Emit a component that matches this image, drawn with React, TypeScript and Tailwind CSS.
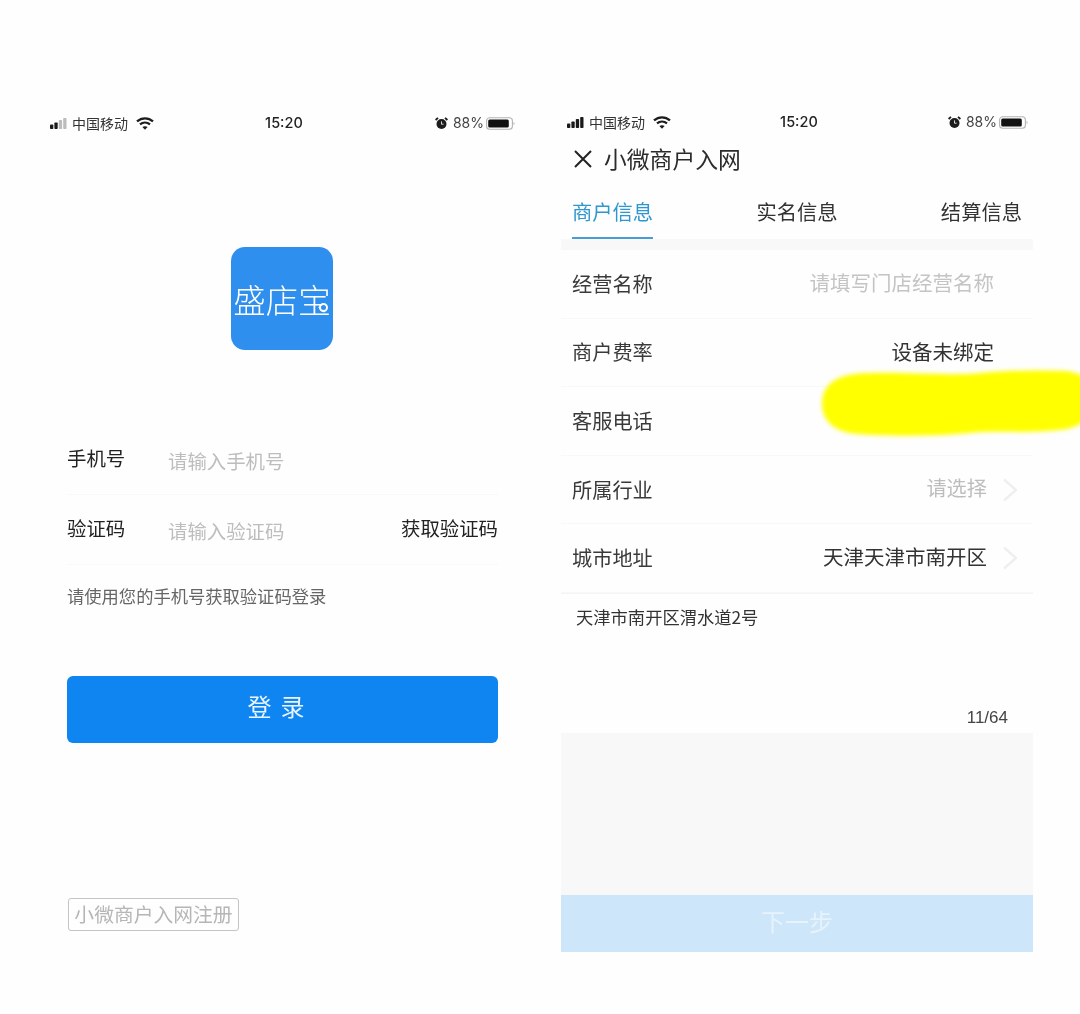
const FONT = "font-['Noto_Sans_CJK_SC','Noto_Sans',sans-serif]";

function Signal({ active }: { active: number }) {
  const bars = [
    { x: 0, h: 4.5 },
    { x: 4.4, h: 6.5 },
    { x: 8.8, h: 9 },
    { x: 13.2, h: 11 },
  ];
  return (
    <svg width="17" height="11" viewBox="0 0 17 11">
      {bars.map((b, i) => (
        <rect key={b.x} x={b.x} y={11 - b.h} width="3.3" height={b.h} rx="0.8" fill={i < active ? "#1a1a1a" : "#bcbcbc"} />
      ))}
    </svg>
  );
}

function Wifi() {
  return (
    <svg width="18" height="13" viewBox="0 0 18 13" fill="none" stroke="#1c1c1c" strokeWidth="2.3">
      <path d="M1 4.4 C5.8 0.3 12.2 0.3 17 4.4" />
      <path d="M4 7.4 C6.9 5 11.1 5 14 7.4" />
      <path d="M9 12.8 L6.4 10 C7.8 8.9 10.2 8.9 11.6 10 Z" fill="#1c1c1c" stroke="none" />
    </svg>
  );
}

function Alarm() {
  return (
    <svg width="13" height="13" viewBox="0 0 13 13">
      <circle cx="6.5" cy="7" r="5" fill="#1c1c1c" />
      <path d="M0.6 3 L3 0.8 M12.4 3 L10 0.8" stroke="#1c1c1c" strokeWidth="1.8" />
      <path d="M6.5 4.4 V7.2 H8.6" stroke="#eee" strokeWidth="0.9" fill="none" />
    </svg>
  );
}

function Battery() {
  return (
    <svg width="30" height="13" viewBox="0 0 30 13">
      <rect x="0.6" y="0.8" width="25.8" height="11.4" rx="3" fill="none" stroke="#b4b4b4" strokeWidth="1.1" />
      <rect x="2.2" y="2.4" width="20.6" height="8.2" rx="1.5" fill="#111" />
      <path d="M27.6 4.8 C28.8 5.2 28.8 7.8 27.6 8.2 Z" fill="#aaa" />
    </svg>
  );
}

function Chevron() {
  return (
    <svg width="16" height="24" viewBox="0 0 16 24" fill="none" stroke="#efefef" strokeWidth="2.4">
      <path d="M2 1.5 L14 12 L2 22.5" />
    </svg>
  );
}

function StatusBar({ active }: { active: number }) {
  return (
    <div className="flex h-[20px] items-center justify-between text-[#333]">
      <div className="flex items-center gap-[5px]">
        <Signal active={active} />
        <span className="pb-[1px] text-[14px] leading-[20px]">中国移动</span>
        <span className="ml-[3px]"><Wifi /></span>
      </div>
      <span className="mr-[21px] font-['Inter',sans-serif] text-[14.5px] font-medium leading-[20px] text-[#222]">15:20</span>
      <div className="flex items-center">
        <Alarm />
        <span className="ml-[5px] mr-[2px] font-['Inter',sans-serif] text-[14px] leading-[20px] text-[#444]">88%</span>
        <Battery />
      </div>
    </div>
  );
}

function FormRow({ label, children, last }: { label: string; children: React.ReactNode; last?: boolean }) {
  return (
    <div className={`flex h-[68.6px] items-center justify-between pl-[11px] ${last ? "" : "border-b border-[#f8f8f8]"}`}>
      <span className="text-[20.2px] leading-[28px] text-[#3a3a3a]">{label}</span>
      {children}
    </div>
  );
}

export default function App() {
  return (
    <div className={`relative flex h-[1014px] w-[1080px] overflow-hidden bg-[#fefefe] blur-[0.4px] ${FONT}`}>
      {/* left phone */}
      <div className="flex w-[561px] flex-col pt-[113px]">
        <div className="pl-[50px] pr-[45px]">
          <StatusBar active={2} />
        </div>
        <div className="mt-[114px] flex justify-center">
          <div className="relative ml-[3px] flex h-[103px] w-[102px] items-center justify-center rounded-[14px] bg-[#2f8fef] pt-[1px]">
            <span className="whitespace-nowrap text-[32.5px] font-light leading-none text-white">盛店宝</span>
            <span className="absolute left-[88px] top-[56px] h-[9px] w-[9px] rounded-full border-[2px] border-white bg-[#2f8fef]" />
          </div>
        </div>
        <div className="ml-[67px] mr-[63px] mt-[75px]">
          <div className="flex h-[70px] items-center border-b border-[#f9f9f9]">
            <span className="w-[101px] pb-[4px] text-[19.4px] leading-[28px] text-[#222]">手机号</span>
            <span className="pt-[3px] text-[19.4px] leading-[28px] text-[#bdbdbd]">请输入手机号</span>
          </div>
          <div className="flex h-[70px] items-center justify-between border-b border-[#f9f9f9]">
            <div className="flex items-center">
              <span className="w-[101px] pb-[4px] text-[19.4px] leading-[28px] text-[#222]">验证码</span>
              <span className="pt-[3px] text-[19.4px] leading-[28px] text-[#bdbdbd]">请输入验证码</span>
            </div>
            <span className="pb-[4px] text-[19.4px] leading-[28px] text-[#222]">获取验证码</span>
          </div>
          <p className="mt-[19px] text-[17.3px] leading-[24px] text-[#666]">请使用您的手机号获取验证码登录</p>
          <div className="mt-[68px] flex h-[67px] items-center justify-center rounded-[6px] bg-[#0f85f1] pb-[8px] pr-[4px] text-[24px] tracking-[9px] text-[#e8f4ff]">
            登录
          </div>
          <div className="ml-[1px] mt-[155px] flex h-[33px] w-[171px] items-center justify-center rounded-[3px] border border-[#c4c4c4] pb-[2px] text-[19.8px] text-[#b6b6b6]">
            小微商户入网注册
          </div>
        </div>
      </div>

      {/* right phone */}
      <div className="flex h-[952px] w-[472px] flex-col pt-[112px]">
        <div className="pl-[6px] pr-[4px]">
          <StatusBar active={4} />
        </div>
        <div className="mt-[15px] flex h-[24px] items-center pl-[13px]">
          <svg width="18" height="18" viewBox="0 0 18 18" stroke="#222" strokeWidth="2" fill="none">
            <path d="M1 1 L17 17 M17 1 L1 17" />
          </svg>
          <span className="ml-[12px] text-[22.8px] leading-[30px] text-[#2b2b2b]">小微商户入网</span>
        </div>
        <div className="mt-[21px] flex h-[47px] items-start justify-between pl-[11px] pr-[11px] pt-[4px]">
          <span className="h-[43px] border-b-[2px] border-[#4a9dd4] text-[20.3px] leading-[30px] text-[#2f97cf]">商户信息</span>
          <span className="text-[20.3px] leading-[30px] text-[#333]">实名信息</span>
          <span className="text-[20.3px] leading-[30px] text-[#333]">结算信息</span>
        </div>
        <div className="h-[11px] bg-[#f8f8f8]" />
        <FormRow label="经营名称">
          <span className="pb-[3px] pr-[39px] text-[20.5px] text-[#c4c4c4]">请填写门店经营名称</span>
        </FormRow>
        <FormRow label="商户费率">
          <span className="pb-[2px] pr-[39px] text-[20.5px] text-[#333]">设备未绑定</span>
        </FormRow>
        <FormRow label="客服电话">
          <span />
        </FormRow>
        <FormRow label="所属行业">
          <div className="flex items-center pr-[15px]">
            <span className="pb-[3px] text-[20.2px] text-[#bdbdbd]">请选择</span>
            <span className="ml-[15px]"><Chevron /></span>
          </div>
        </FormRow>
        <FormRow label="城市地址">
          <div className="flex items-center pr-[15px]">
            <span className="pb-[3px] text-[20.5px] text-[#333]">天津天津市南开区</span>
            <span className="ml-[15px]"><Chevron /></span>
          </div>
        </FormRow>
        <div className="flex h-[140px] flex-col justify-between border-t border-[#f5f5f5] pb-[4px] pl-[15px] pr-[25px] pt-[10px]">
          <p className="text-[17.3px] leading-[26px] text-[#333]">天津市南开区渭水道2号</p>
          <p className="text-right font-['Liberation_Sans',sans-serif] text-[17px] leading-[22px] text-[#444]">11/64</p>
        </div>
        <div className="flex-1 bg-[#f8f8f8]" />
        <div className="flex h-[57px] items-center justify-center bg-[#cde6fa] pb-[5px] text-[24px] text-[#e6f3fd]">下一步</div>
      </div>

      {/* yellow scribble laid over the phone number */}
      <svg className="absolute left-[820px] top-[368px] blur-[2px]" width="275" height="70" viewBox="0 0 275 70">
        <path
          d="M2 36 C2 14 20 5 50 5 C90 4 130 8 160 5 C190 2 225 2 245 3 C262 4 275 14 275 30 C275 48 262 60 240 62 C200 66 180 62 150 65 C110 69 60 68 36 66 C16 64 2 54 2 36 Z"
          fill="#ffff00"
        />
      </svg>
    </div>
  );
}
